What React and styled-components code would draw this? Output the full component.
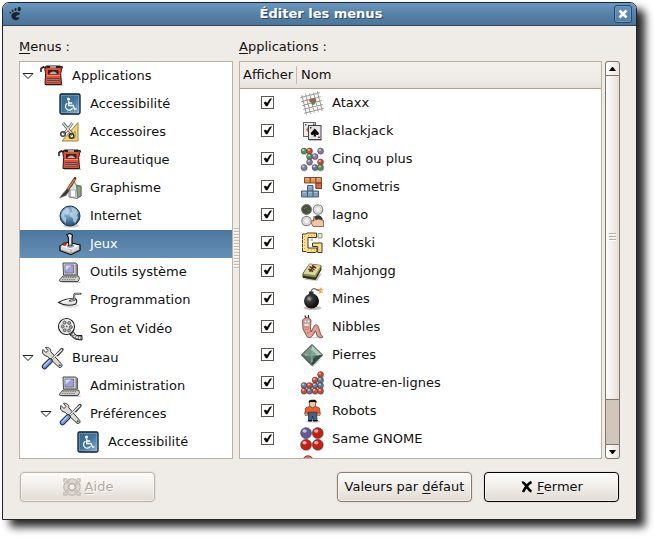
import React from "react";
import styled, { createGlobalStyle, css } from "styled-components";

const GlobalStyle = createGlobalStyle`
  *, *::before, *::after { box-sizing: border-box; }
  body {
    margin: 0;
    background: #fff;
    color: #101010;
    font: 13px/18px "DejaVu Sans", Verdana, sans-serif;
  }
  button { font: inherit; color: inherit; }
`;

/* ---------- window ---------- */

const Desktop = styled.div`
  padding: 2px 18px 18px 2px;
`;

const Window = styled.main`
  border: 1px solid #20252a;
  border-radius: 7px 7px 0 0;
  background: #efebe6;
  box-shadow: 8px 7px 9px rgba(0, 0, 0, 0.84);
`;

const TitleBar = styled.header`
  display: grid;
  grid-template-columns: 24px 1fr 24px;
  align-items: center;
  height: 23px;
  padding: 0 2px 0 5px;
  border-bottom: 1px solid #2f475e;
  border-radius: 6px 6px 0 0;
  background: linear-gradient(#6a97c0, #5781a8 50%, #4e7597);
`;

const Title = styled.h1`
  margin: 0;
  color: #fff;
  font-size: 13px;
  line-height: 18px;
  font-weight: bold;
  text-align: center;
  text-shadow: 1px 1px 0 #2e4a66;
`;

const CloseButton = styled.button`
  display: grid;
  place-items: center;
  justify-self: end;
  width: 18px;
  height: 18px;
  padding: 0;
  margin-right: 2px;
  border: 1px solid #2c4963;
  border-radius: 3px;
  background: linear-gradient(#6390b9, #5580a8);
  box-shadow: inset 0 0 0 1px #6d98bf;
`;

const Body = styled.div`
  padding: 12px 16px 17px;
`;

const Panes = styled.div`
  display: grid;
  grid-template-columns: 214px 6px minmax(0, 1fr);
`;

const Pane = styled.section`
  display: flex;
  flex-direction: column;
  gap: 5px;
`;

const PaneTitle = styled.h2`
  margin: 0;
  font-size: 13px;
  line-height: 18px;
  font-weight: normal;
`;

const Mnemonic = styled.span`
  text-decoration: underline;
  text-decoration-thickness: 1px;
  text-underline-offset: 2px;
`;

const Splitter = styled.div`
  align-self: center;
  height: 42px;
  margin-left: 1px;
  background: repeating-linear-gradient(#c5bbaf 0 1px, #fbfaf8 1px 2px, #efebe6 2px 3px);
`;

/* ---------- menu tree ---------- */

const Tree = styled.ul`
  flex: 1;
  margin: 0;
  padding: 0 0 2px;
  border: 1px solid #bab09f;
  background: #fff;
  list-style: none;
`;

const TreeRow = styled.li`
  display: flex;
  align-items: center;
  height: ${(p) => (p.$tall ? 30 : 28)}px;
  padding-left: ${(p) => 2 + p.$level * 18}px;
  ${(p) =>
    p.$selected &&
    css`
      color: #fff;
      background: linear-gradient(#4c779f, #668fb6);
    `}
`;

const Expander = styled.button`
  flex: none;
  display: flex;
  width: 18px;
  padding: 0;
  border: 0;
  background: none;
`;

const ExpanderSpace = styled.span`
  flex: none;
  width: 18px;
`;

const IconSvg = styled.svg`
  flex: none;
  display: block;
  overflow: visible;
`;

const RowText = styled.span`
  padding-left: 8px;
  white-space: nowrap;
`;

/* ---------- application table ---------- */

const ScrollArea = styled.div`
  flex: 1;
  display: grid;
  grid-template-columns: minmax(0, 1fr) 15px;
  grid-template-rows: minmax(0, 1fr);
  column-gap: 3px;
`;

const ListFrame = styled.div`
  display: flex;
  flex-direction: column;
  border: 1px solid #bab09f;
  background: #fff;
`;

const ListViewport = styled.div`
  flex: 1 1 0;
  height: 0;
  min-height: 0;
  overflow: hidden;
`;

const Table = styled.table`
  width: 100%;
  table-layout: fixed;
  border-collapse: separate;
  border-spacing: 0;
`;

const HeadCell = styled.th`
  width: ${(p) => p.$width || "auto"};
  height: 27px;
  padding: 0 0 0 ${(p) => (p.$first ? 3 : 4)}px;
  border-bottom: 1px solid #b39f91;
  background: linear-gradient(#f3f0ec, #efebe6 70%, #e6e0da);
  font-weight: normal;
  text-align: left;
  white-space: nowrap;
`;

const HeadText = styled.span`
  display: block;
  ${(p) =>
    p.$divided &&
    css`
      border-right: 1px solid #c4b8ab;
    `}
`;

const CheckCell = styled.td`
  height: 28px;
  padding: 0 0 2px 21px;
`;

const NameCell = styled.td`
  height: 28px;
  padding: 0 0 0 3px;
`;

const AppLabel = styled.label`
  display: flex;
  align-items: center;
`;

const CheckStack = styled.span`
  display: grid;
  width: 13px;
  height: 13px;
  > * {
    grid-area: 1 / 1;
  }
`;

const CheckInput = styled.input`
  appearance: none;
  width: 13px;
  height: 13px;
  margin: 0;
  border: 1px solid #5f574e;
  background: #fff;
  &:not(:checked) + svg {
    visibility: hidden;
  }
`;

const CheckMark = styled.svg`
  display: block;
  pointer-events: none;
`;

/* ---------- scroll bar ---------- */

const ScrollBar = styled.div`
  display: flex;
  flex-direction: column;
  border-radius: 3px;
  background: #d0c6bc;
`;

const ScrollButton = styled.button`
  flex: none;
  display: grid;
  place-items: center;
  height: 15px;
  padding: 0;
  border: 1px solid #857568;
  border-radius: ${(p) => (p.$down ? "0 0 3px 3px" : "3px 3px 0 0")};
  background: linear-gradient(90deg, #fff, #e9e4df);
`;

const Trough = styled.div`
  flex: 1;
  display: flex;
  border: solid #857568;
  border-width: 0 1px;
`;

const Thumb = styled.div`
  flex: 1;
  display: grid;
  place-items: center;
  height: 88%;
  border-bottom: 1px solid #857568;
  background: linear-gradient(90deg, #fdfdfc, #efebe7 60%, #e4ded8);
`;

const Grip = styled.div`
  width: 7px;
  height: 8px;
  background: repeating-linear-gradient(#b9aea2 0 1px, #fff 1px 2px, #f2efeb 2px 3px);
`;

/* ---------- footer ---------- */

const Footer = styled.footer`
  display: flex;
  gap: 12px;
  padding: 13px 1px 0;
`;

const PushButton = styled.button`
  display: flex;
  align-items: center;
  justify-content: center;
  gap: 3px;
  width: 135px;
  height: 30px;
  padding: 0;
  border: 1px solid ${(p) => (p.$default ? "#000" : "#8d7c70")};
  border-radius: 4px;
  background: linear-gradient(#fdfcfb, #f0ece8 50%, #e2dbd4);
  box-shadow: inset 0 0 0 1px rgba(255, 255, 255, 0.45), 0 0 0 1px #e6e0da;
  white-space: nowrap;
  ${(p) => p.$push && "margin-right: auto;"}
  &:disabled {
    border-color: #bfb3a5;
    color: #b5aa9f;
    text-shadow: 1px 1px 0 #fff;
  }
`;

/* ---------- drawings ---------- */

const GradientStore = styled.svg`
  display: block;
  width: 0;
  height: 0;
`;

const Gradients = () => (
  <GradientStore aria-hidden="true">
    <defs>
      <linearGradient id="blueTile" x1="0" y1="0" x2="1" y2="1">
        <stop offset="0" stopColor="#34648b" />
        <stop offset="0.5" stopColor="#41749c" />
        <stop offset="1" stopColor="#8db9d6" />
      </linearGradient>
      <radialGradient id="globe" cx="0.4" cy="0.3" r="0.75">
        <stop offset="0" stopColor="#a9c8e0" />
        <stop offset="0.5" stopColor="#5587b2" />
        <stop offset="1" stopColor="#23456b" />
      </radialGradient>
      <radialGradient id="bomb" cx="0.35" cy="0.35" r="0.7">
        <stop offset="0" stopColor="#b0b0b0" />
        <stop offset="0.3" stopColor="#3a3a3a" />
        <stop offset="1" stopColor="#050505" />
      </radialGradient>
    </defs>
  </GradientStore>
);

const Ball = ({ x, y, r = 3.2, c }) => (
  <g>
    <circle cx={x + 0.5} cy={y + 0.7} r={r} fill="#000" opacity="0.18" />
    <circle cx={x} cy={y} r={r - 0.3} fill={c} stroke="#332c30" strokeOpacity="0.6" strokeWidth="0.8" />
    <ellipse cx={x - r * 0.25} cy={y - r * 0.35} rx={r * 0.38} ry={r * 0.3} fill="#fff" opacity="0.65" />
  </g>
);

const RED = "#d04a38";
const GRAY = "#8a7ca0";
const GREEN = "#4f9a55";
const STEEL = "#66788f";

const drawings = {
  typewriter: (
    <g>
      <path d="M6 20.5h17v1.500H6z" fill="#000" opacity=".25" />
      <path d="M1 8V4.500L3.500 3 6 4.500M21.500 2l1 2.500" fill="none" stroke="#222" strokeWidth="1.600" />
      <path d="M6 2h14.500l1 4-.8 3.500.8 11H5l.6-11L4.800 5.500z" fill="#ea4b33" stroke="#2a1512" />
      <path d="M6.500 2h13.500v2H6.500z" fill="#222" />
      <path d="M10 2.300h6v1.400h-6z" fill="#d8d0cc" />
      <path d="M8 6h10.500v4.500H8z" fill="#38201e" />
      <path d="M9.500 10c1-3.500 6.500-3.500 7.500 0z" fill="#b8b0aa" />
      <path d="M6.500 11.500h13.500" stroke="#ff8a70" />
      <path d="M7 14h12.500v4.500H7z" fill="#6b4039" />
      <path d="M7.500 15.500h12M7.500 17.500h12" stroke="#e0b0a2" strokeDasharray="1 1" />
    </g>
  ),
  access: (
    <g>
      <rect x="2" y="2" width="20" height="20" rx="1.500" fill="url(#blueTile)" stroke="#0c1a28" strokeWidth="1.300" />
      <rect x="3.200" y="3.200" width="17.600" height="17.600" fill="none" stroke="#9fc3dc" strokeWidth=".7" opacity=".7" />
      <circle cx="10.500" cy="7" r="1.500" fill="#fff" />
      <path d="M10.700 8.500v5h4.300l1.600 3.800 1.900-.6M10.700 11h3.500" fill="none" stroke="#fff" strokeWidth="1.300" />
      <path d="M9.300 11.300a3.700 3.700 0 1 0 5.200 4.900" fill="none" stroke="#fff" strokeWidth="1.200" />
    </g>
  ),
  scissors: (
    <g>
      <path d="M20 2.500V21H4z" fill="#f0d374" stroke="#9d8434" />
      <path d="M17 11.500V18h-6z" fill="#fff" stroke="#9d8434" />
      <path d="M5 3l9 11M14.500 3L6 14" stroke="#555" strokeWidth="2.800" />
      <path d="M5 3l9 11M14.500 3L6 14" stroke="#ddd" strokeWidth="1.300" />
      <circle cx="5" cy="14" r="2.300" fill="none" stroke="#444" strokeWidth="1.500" />
      <circle cx="13.500" cy="16" r="2.300" fill="none" stroke="#333" strokeWidth="1.500" />
    </g>
  ),
  graphics: (
    <g>
      <path d="M11 12l3-2 2-5 2 4 5 1v10l-4 2.500-8-1.500z" fill="#dfe3df" stroke="#6a726a" strokeWidth=".9" />
      <path d="M18.500 9.500l4.500 1v9.500l-3.500 1.500z" fill="#8aa184" stroke="#56604f" strokeWidth=".8" />
      <path d="M12.500 14h5v7h-5z" fill="#fff" stroke="#888" strokeWidth=".6" />
      <path d="M17 2.500L9.500 14" stroke="#4a2a10" strokeWidth="2.800" strokeLinecap="round" />
      <path d="M16.800 3L10 13" stroke="#cc8a48" strokeWidth="1.500" />
      <path d="M9 13l2.500 1.500-3.500 5L1.500 22l3-4z" fill="#3a3a3a" stroke="#777" strokeWidth=".6" />
    </g>
  ),
  globe: (
    <g>
      <ellipse cx="13" cy="21.500" rx="8" ry="2" fill="#000" opacity=".2" />
      <circle cx="12" cy="12" r="10" fill="url(#globe)" stroke="#1e3651" strokeWidth="1" />
      <path d="M4.500 7.500l4-3.500 3 1-1 2.500 1.500 1-3 2.500-2-1-1 2 2.500 2-1 5.500-3-4-1.500-4zM13 3l5 2 2.500 4-1.500 1.500 1 3-2.500 5.500-2-1-1-4.500-2.500-1-.5-3 3-2z" fill="#c2daea" opacity=".75" />
    </g>
  ),
  joystick: (
    <g>
      <path d="M2 14l8-3.500 12 2.500v5l-9 4.500L2 18.500z" fill="#d9d9d9" stroke="#111" strokeWidth="1.300" />
      <path d="M2.500 14l8-3 11 2.500-8.500 3.700z" fill="#fff" />
      <path d="M13 17.500v4.500M3 18l10 3.500 8.500-4" stroke="#8b8b8b" strokeWidth=".8" fill="none" />
      <path d="M9 2.500l3-1 2.500 1.500-.5 3v8h-3.500V6z" fill="#e8e8e8" stroke="#111" strokeWidth="1.200" />
      <ellipse cx="12.300" cy="14" rx="3.500" ry="1.300" fill="none" stroke="#777" strokeWidth=".8" />
      <ellipse cx="6.500" cy="12" rx="1.700" ry="1.500" fill="#e32b20" stroke="#6b0d0a" strokeWidth=".7" />
    </g>
  ),
  computer: (
    <g>
      <path d="M4 21.500h18l1 1.500H4z" fill="#000" opacity=".2" />
      <path d="M5 3h12.500l2 1.500V15H5.500z" fill="#d3cfc9" stroke="#4a4a4a" strokeWidth="1" />
      <path d="M17.500 3.500l1.800 1.200V15l-1.800-.5z" fill="#8d8a86" />
      <path d="M7 5h8.500v8H7z" fill="#a09fd6" stroke="#6a6a90" strokeWidth=".8" />
      <path d="M7.500 5.500h6l-6 5z" fill="#d6d6f4" />
      <path d="M5 16h15.500l1 2.500-1.500 3H2L1.500 20z" fill="#d3d0cb" stroke="#4a4a4a" strokeWidth="1" />
      <path d="M5 17.700h13M4 19.700h13.500" stroke="#777" strokeDasharray="1.500 .8" />
    </g>
  ),
  trowel: (
    <g>
      <path d="M4 17.500l9 1.500 8-2" fill="none" stroke="#000" strokeWidth="2" opacity=".12" />
      <path d="M0.500 14.500C5 11.500 9 10.500 16 10.200c3 .5 3.500 3 1.800 5.800-5 1.800-12 1.500-17.300-1.500z" fill="#e6e6e6" stroke="#222" strokeWidth="1.100" />
      <path d="M4 14.200c4-1.800 7-2.700 11-3" fill="none" stroke="#fff" strokeWidth="1.500" />
      <path d="M12 12.800l4.500-1-.5-4.500 1-1.500h5.500" fill="none" stroke="#444" strokeWidth="2" strokeLinecap="round" />
      <path d="M12.500 12.700l4-1-.5-4.400 1.200-1.500h5" fill="none" stroke="#c8c8c8" strokeWidth=".8" />
    </g>
  ),
  film: (
    <g>
      <path d="M13 14c3-1 3 4 6 4.500h5V23l-5-.5c-5-1-4-3.500-7-4.500z" fill="#777" stroke="#111" strokeWidth=".9" />
      <path d="M15 16.500l1.500 2.500 3 1.500 4 .5" fill="none" stroke="#eee" strokeWidth="2" strokeDasharray="1.500 1" />
      <circle cx="8.500" cy="9.500" r="8" fill="#dedede" stroke="#222" strokeWidth="1.200" />
      <circle cx="8.500" cy="9.500" r="6.700" fill="none" stroke="#fff" strokeWidth=".9" />
      {[[6.6, 5.500], [11.200, 6], [4.700, 9.500], [12.900, 10], [6.700, 13.300], [11, 13.500]].map(([x, y]) => (
        <circle key={x} cx={x} cy={y} r="1.500" fill="#a8a8a8" stroke="#444" strokeWidth=".7" />
      ))}
      <circle cx="8.700" cy="9.500" r=".8" fill="#555" />
    </g>
  ),
  tools: (
    <g>
      <path d="M3 3.500l3 3 2-2-2.500-3c3-.7 5.500 1 5.300 4.300l11 12.700c1 2-1 3.700-2.800 2.800L7.500 10.500C3.500 9.500 1.500 7 3 3.500z" fill="#dcdcd5" stroke="#333" strokeWidth="1" />
      <circle cx="19.700" cy="19.200" r="1" fill="#444" />
      <path d="M22 3L11 14" stroke="#222" strokeWidth="2" />
      <path d="M22 3.500l-4.500 5" stroke="#444" strokeWidth="3.400" strokeLinecap="round" />
      <path d="M22 3.500L11 14" stroke="#eee" strokeWidth="1.500" />
      <path d="M10 15l-5.500 5.500" stroke="#1c2c4c" strokeWidth="5.500" strokeLinecap="round" />
      <path d="M10 15l-5.500 5.500" stroke="#6d92c8" strokeWidth="3.800" strokeLinecap="round" />
      <path d="M9.300 14.700l-5 5" stroke="#b8cdee" strokeWidth="1.300" strokeLinecap="round" />
    </g>
  ),
  ataxx: (
    <g>
      <g stroke="#a09a95" strokeWidth="1" transform="rotate(-14 12 12)">
        <path d="M4 2v20M8 2v20M12 2v20M16 2v20M20 2v20M2 4h20M2 8h20M2 12h20M2 16h20M2 20h20" />
      </g>
      <path d="M10 8l4-1 2.500 3-2.500 4-2-.5z" fill="#5a855a" />
      <circle cx="14.500" cy="9" r="1.800" fill="#a85a48" />
      <path d="M9.500 9l2 2" stroke="#c04838" strokeWidth="1.800" />
    </g>
  ),
  cards: (
    <g>
      <rect x="3.500" y="3.500" width="12" height="14" fill="#ececec" stroke="#666" />
      <path d="M8.500 7l2.500 3.500L8.500 14 6 10.500z" fill="#ee5530" />
      <path d="M5 5h1.500v1.500H5zM13 4.500h1.500V6H13z" fill="#555" />
      <path d="M9.500 20.500h12.500v1.500H9.500z" fill="#000" opacity=".25" />
      <rect x="8.500" y="6.500" width="12.500" height="14" fill="#e3e3e3" stroke="#444" />
      <path d="M14.800 9.500l4 4.500c.4 2-2.100 2.800-3.300 1.300l.7 2.200h-2.800l.7-2.200c-1.200 1.500-3.700.7-3.300-1.300z" fill="#050505" />
      <path d="M10 8h1.500v1.500H10zM18.200 17.500h1.500V19h-1.500z" fill="#333" />
    </g>
  ),
  fiveplus: (
    <g>
      <Ball x={4} y={4} c={GREEN} /><Ball x={9.500} y={4} c={RED} /><Ball x={20.500} y={4} c={GRAY} />
      <Ball x={9.500} y={9.500} c={GREEN} /><Ball x={15} y={9.500} c={GRAY} />
      <Ball x={9.500} y={15} c={GRAY} /><Ball x={20.500} y={15} c={RED} />
      <Ball x={4} y={20.500} c={GRAY} /><Ball x={15} y={20.500} c={STEEL} /><Ball x={20.500} y={20.500} c={GREEN} />
    </g>
  ),
  blocks: (
    <g strokeWidth=".9">
      <path d="M4.500 2.500h17v11h-5.500V8h-11.500z" fill="#e09052" stroke="#754024" />
      <path d="M16 8h5.500v5.500H16z" fill="#d8674a" stroke="#754024" />
      <path d="M10.200 2.500V8M15.800 2.500V8M16 8h5.500" stroke="#754024" />
      <path d="M5.500 4h3.500M11.500 4h3M17 4h3" stroke="#f7c79c" />
      <path d="M7.500 10.500H13V16h5.500v6H1.500v-6h6z" fill="#7f9fc2" stroke="#41546e" />
      <path d="M7.500 16H13M7.500 16v6M13 16v6" stroke="#41546e" />
      <path d="M8.700 12h3M2.800 17.500H6M8.700 17.500h3M14.200 17.500h3" stroke="#b5cae0" />
    </g>
  ),
  iagno: (
    <g>
      <circle cx="6.500" cy="6.500" r="5" fill="#49503c" stroke="#777b69" strokeWidth="1" />
      <path d="M4 5.500l3-1M7.500 8l2-.5" stroke="#6f7660" />
      <circle cx="18" cy="6.500" r="4.700" fill="#eef0ee" stroke="#888" strokeWidth="1.200" />
      <circle cx="18" cy="6.500" r="3" fill="none" stroke="#c4c4c4" strokeWidth=".8" />
      <circle cx="6.500" cy="18" r="4.700" fill="#eef0ee" stroke="#888" strokeWidth="1.200" />
      <circle cx="6.500" cy="18" r="3" fill="none" stroke="#c4c4c4" strokeWidth=".8" />
      <circle cx="18" cy="17" r="4.700" fill="#303a28" />
      <path d="M14 13l2 4 2.500-1 5 1.500V23.500H13l-1.500-3 .5-3 2 .5z" fill="#efc5a8" stroke="#7c4b38" strokeWidth=".8" />
    </g>
  ),
  klotski: (
    <g strokeWidth="1">
      <path d="M2.500 3h3l1.500-1h9.500v4.500H8V17h9v3.500l-2 1H7l-1-1H2.500z" fill="#f5de88" stroke="#48391f" />
      <path d="M2.800 4.500l2 2-2 2 2 2-2 2 2 2-2 2 2 2" fill="none" stroke="#fff4c2" />
      <path d="M4.500 5v13M8 4.500h7M8 19h7" stroke="#d98f55" strokeDasharray="1 2" />
      <path d="M12.500 12H22v9.500h-4.300V15.500h-5.200z" fill="#f5de88" stroke="#48391f" />
      <path d="M18 2.500h4V7h-4z" fill="#f7e79a" stroke="#7f98a2" />
      <path d="M10.500 7.500h2.500v2.500h-2.500z" fill="#b4c6cd" />
    </g>
  ),
  mahjongg: (
    <g>
      <path d="M4 20.500l13 1.500 5-8z" fill="#000" opacity=".25" />
      <path d="M3 14.500L9.500 5 21 6.500v4L15.500 20.500 3 18.500z" fill="#8d9347" stroke="#2f3117" strokeWidth=".9" />
      <path d="M3 16.500l12.500 2L21 9v2l-5.500 9.500L3 18.500z" fill="#2d3418" />
      <path d="M3.300 14.500L9.500 5 21 6.500l-6 9.800z" fill="#d9d6a0" />
      <path d="M9.500 7.500l5 3.500M14 6.800l-4.500 6M8.500 10l4.500 2.500M12 6.500l4 2.500" stroke="#632f20" strokeWidth="1.500" />
    </g>
  ),
  mine: (
    <g>
      <ellipse cx="12.500" cy="21" rx="9" ry="2" fill="#000" opacity=".25" />
      <path d="M11 5c.5-3.500 3.500-4.500 6-2l2 .5" fill="none" stroke="#666" strokeWidth="1.300" />
      <path d="M9 4.500h4.500V8H9z" fill="#333" />
      <circle cx="11.500" cy="14" r="7.500" fill="url(#bomb)" />
      <path d="M18 1.500l2 1 1-2.500.8 2.500L23 2l-1 2 1 2-2-.8-1.500 1.500V4.500z" fill="#ff7a22" />
      <path d="M19.500 3h3l-1 2z" fill="#ffe456" />
    </g>
  ),
  worm: (
    <g>
      <path d="M6 22h10l2-2 5 2-2 1.500z" fill="#000" opacity=".2" />
      <path d="M5 .5l1 3M8.500 0v3" stroke="#333" strokeWidth="1.300" />
      <path d="M2.500 6c.5-4 7-4.500 8.500-1l-.5 8 .5 4 3.500-6.500c1.500-1.500 3.500-.5 4 1.500l2 7 2.500 3-3 .8-2.800-2-1.700-5-4 6c-2 1.500-4.500.8-5-1L3 14z" fill="#e2a294" stroke="#7a453c" strokeWidth=".9" />
      <path d="M4 12h5M4.500 15l4.500-1.300M6 18.500l4-1.500M12.500 17l2 1.500M16.500 13l2.500-.7M18 17l2.500-.7" stroke="#b8776b" strokeWidth=".8" />
      <circle cx="5.500" cy="6.500" r="1.400" fill="#fff" stroke="#555" strokeWidth=".4" />
      <circle cx="8.500" cy="6.500" r="1.400" fill="#fff" stroke="#555" strokeWidth=".4" />
      <path d="M4.500 10h4" stroke="#fff" strokeWidth="1.500" />
    </g>
  ),
  gem: (
    <g>
      <path d="M4 15l9 9 9-9-9 5z" fill="#000" opacity=".2" />
      <path d="M12 1.500L22.500 12 12 22.500 1.500 12z" fill="#6f9080" />
      <path d="M12 1.500V12H1.500z" fill="#7f9a8b" /><path d="M12 1.500V12h10.500z" fill="#b3c9bb" />
      <path d="M12 22.500V12h10.500z" fill="#2f4f41" /><path d="M12 22.500V12H1.500z" fill="#587769" />
      <path d="M12 5v14M5 12h14" stroke="#dbe7df" strokeWidth=".8" />
      <path d="M12 7l5 5-5 5-5-5z" fill="#6e9180" opacity=".7" />
      <path d="M12 1.500L22.500 12 12 22.500 1.500 12z" fill="none" stroke="#30463a" strokeWidth="1" />
    </g>
  ),
  fourrow: (
    <g>
      <Ball x={20.500} y={3.500} c={RED} /><Ball x={15} y={9} c={RED} /><Ball x={20.500} y={9} c={STEEL} />
      <Ball x={4} y={14.500} c={STEEL} /><Ball x={9.500} y={14.500} c={RED} /><Ball x={15} y={14.500} c={STEEL} /><Ball x={20.500} y={14.500} c={STEEL} />
      <Ball x={4} y={20} c={RED} /><Ball x={9.500} y={20} c={STEEL} /><Ball x={15} y={20} c={RED} /><Ball x={20.500} y={20} c={RED} />
    </g>
  ),
  robot: (
    <g>
      <ellipse cx="13" cy="22.500" rx="7" ry="1.200" fill="#000" opacity=".2" />
      <path d="M8.500 13h8l.5 9H13.300l-.7-5-.8 5H8.500z" fill="#3f6386" stroke="#1d2c3c" strokeWidth=".8" />
      <path d="M8 21.700h4M13.300 21.700h4.500" stroke="#111" strokeWidth="1.300" />
      <path d="M5.500 9l4-1.500h6l4 1.500.7 6h-2.700l-.5-2H8l-.5 2H4.800z" fill="#ee5f2c" stroke="#8a3a1e" strokeWidth=".8" />
      <path d="M5 14h2.500v2.500H5zM17.500 14H20v2.500h-2.500z" fill="#dfa48a" stroke="#633c2d" strokeWidth=".5" />
      <path d="M9.500 2.500h6v4.700l-3 1.600-3-1.600z" fill="#efc3a8" stroke="#54382c" strokeWidth=".7" />
      <path d="M8.800 4.300V1.800L11 .7h4l1.500 1.300v2.300l-1.300-1.300H10z" fill="#111" />
    </g>
  ),
  same: (
    <g>
      <Ball x={6} y={6} r={5.700} c="#605a9a" /><Ball x={17.700} y={6} r={5.700} c="#c81f12" />
      <Ball x={6} y={17.700} r={5.700} c="#c81f12" /><Ball x={17.700} y={17.700} r={5.700} c="#c81f12" />
    </g>
  ),
  robots2: (
    <g>
      <circle cx="8" cy="6.300" r="5.500" fill="#e66b64" stroke="#7a3a38" strokeWidth="1" />
      <ellipse cx="7" cy="4" rx="2.500" ry="1.300" fill="#f3a8a2" />
    </g>
  ),
};

const Icon = ({ name }) => (
  <IconSvg width="24" height="24" viewBox="0 0 24 24" aria-hidden="true">
    {drawings[name]}
  </IconSvg>
);

const FootIcon = () => (
  <IconSvg width="16" height="16" viewBox="0 0 16 16" aria-hidden="true">
    <g fill="#172431" stroke="#7d9fbe" strokeWidth=".4">
      <path d="M3.300 8.500c1-2.500 5.500-3.500 8-2 2 1.500-.5 3-2.500 3.300-1 .2-.8 1.500.3 1.500 1-.2 2-.8 2.500 0 .4 1.700-2 3.700-4.200 3.300-3.200-.5-5-3.800-4.100-6.100z" />
      <ellipse cx="11.300" cy="3" rx="1.900" ry="2.500" />
      <ellipse cx="7.500" cy="3.500" rx="1.300" ry="1.800" />
      <ellipse cx="4.700" cy="4.800" rx="1.100" ry="1.500" />
      <ellipse cx="2.300" cy="6.600" rx="1" ry="1.200" />
    </g>
  </IconSvg>
);

const LifebuoyIcon = () => (
  <IconSvg width="20" height="20" viewBox="0 0 20 20" aria-hidden="true">
    <path d="M2 5V2h3M15 2h3v3M18 15v3h-3M5 18H2v-3" fill="none" stroke="#c4bcb4" strokeWidth="1.500" />
    <circle cx="10" cy="10" r="6" fill="none" stroke="#bdb5ad" strokeWidth="5.500" />
    <circle cx="10" cy="10" r="6" fill="none" stroke="#dcd7d2" strokeWidth="3.500" />
    <circle cx="10" cy="10" r="6" fill="none" stroke="#cbc4bd" strokeWidth="3.500" strokeDasharray="3.400 6.025" strokeDashoffset="-3" />
    <circle cx="10" cy="10" r="3.200" fill="#f3f0ed" stroke="#b3aaa1" />
  </IconSvg>
);

/* ---------- data ---------- */

const menus = [
  { label: "Applications", icon: "typewriter", level: 0, open: true },
  { label: "Accessibilité", icon: "access", level: 1 },
  { label: "Accessoires", icon: "scissors", level: 1 },
  { label: "Bureautique", icon: "typewriter", level: 1 },
  { label: "Graphisme", icon: "graphics", level: 1 },
  { label: "Internet", icon: "globe", level: 1 },
  { label: "Jeux", icon: "joystick", level: 1, selected: true },
  { label: "Outils système", icon: "computer", level: 1 },
  { label: "Programmation", icon: "trowel", level: 1 },
  { label: "Son et Vidéo", icon: "film", level: 1, tall: true },
  { label: "Bureau", icon: "tools", level: 0, open: true },
  { label: "Administration", icon: "computer", level: 1 },
  { label: "Préférences", icon: "tools", level: 1, open: true },
  { label: "Accessibilité", icon: "access", level: 2 },
];

const apps = [
  ["Ataxx", "ataxx"],
  ["Blackjack", "cards"],
  ["Cinq ou plus", "fiveplus"],
  ["Gnometris", "blocks"],
  ["Iagno", "iagno"],
  ["Klotski", "klotski"],
  ["Mahjongg", "mahjongg"],
  ["Mines", "mine"],
  ["Nibbles", "worm"],
  ["Pierres", "gem"],
  ["Quatre-en-lignes", "fourrow"],
  ["Robots", "robot"],
  ["Same GNOME", "same"],
];

const MenuItem = ({ item }) => (
  <TreeRow
    role="treeitem"
    aria-level={item.level + 1}
    aria-expanded={item.open}
    aria-selected={!!item.selected}
    $level={item.level}
    $selected={item.selected}
    $tall={item.tall}
  >
    {item.open ? (
      <Expander aria-label={`Replier ${item.label}`}>
        <svg width="12" height="8" viewBox="0 0 12 8" aria-hidden="true">
          <path d="M1 1.500h10L6 6.500z" fill="#fff" stroke="#222" />
        </svg>
      </Expander>
    ) : (
      <ExpanderSpace />
    )}
    <Icon name={item.icon} />
    <RowText>{item.label}</RowText>
  </TreeRow>
);

const AppRow = ({ name, icon }) => {
  const id = `app-${icon}`;
  return (
    <tr>
      <CheckCell>
        <CheckStack>
          <CheckInput type="checkbox" id={id} defaultChecked />
          <CheckMark width="13" height="13" viewBox="0 0 13 13" aria-hidden="true">
            <path d="M3 6.500l2-.5 1 1.500L9 3l1.500-.3L6.300 10H5z" fill="#000" stroke="#000" strokeWidth=".6" />
          </CheckMark>
        </CheckStack>
      </CheckCell>
      <NameCell>
        <AppLabel htmlFor={id}>
          <Icon name={icon} />
          <RowText>{name}</RowText>
        </AppLabel>
      </NameCell>
    </tr>
  );
};

export default function App() {
  return (
    <Desktop>
      <GlobalStyle />
      <Window>
        <TitleBar>
          <FootIcon />
          <Title>Éditer les menus</Title>
          <CloseButton aria-label="Fermer la fenêtre">
            <svg width="10" height="10" viewBox="0 0 10 10" aria-hidden="true">
              <path d="M1.500 1.500l7 7M8.500 1.500l-7 7" stroke="#fff" strokeWidth="2.600" />
            </svg>
          </CloseButton>
        </TitleBar>
        <Body>
          <Panes>
            <Pane>
              <PaneTitle><Mnemonic>M</Mnemonic>enus :</PaneTitle>
              <Tree role="tree" aria-label="Menus">
                {menus.map((item, i) => <MenuItem key={i} item={item} />)}
              </Tree>
            </Pane>
            <Splitter role="separator" aria-orientation="vertical" />
            <Pane>
              <PaneTitle><Mnemonic>A</Mnemonic>pplications :</PaneTitle>
              <ScrollArea>
                <ListFrame>
                  <ListViewport>
                    <Table>
                      <thead>
                        <tr>
                          <HeadCell $width="57px" $first><HeadText $divided>Afficher</HeadText></HeadCell>
                          <HeadCell><HeadText>Nom</HeadText></HeadCell>
                        </tr>
                      </thead>
                      <tbody>
                        {apps.map(([name, icon]) => <AppRow key={icon} name={name} icon={icon} />)}
                        <tr>
                          <CheckCell />
                          <NameCell><Icon name="robots2" /></NameCell>
                        </tr>
                      </tbody>
                    </Table>
                  </ListViewport>
                </ListFrame>
                <ScrollBar>
                  <ScrollButton aria-label="Défiler vers le haut">
                    <svg width="7" height="4" viewBox="0 0 7 4" aria-hidden="true"><path d="M0 4l3-4h1l3 4z" /></svg>
                  </ScrollButton>
                  <Trough>
                    <Thumb><Grip /></Thumb>
                  </Trough>
                  <ScrollButton $down aria-label="Défiler vers le bas">
                    <svg width="7" height="4" viewBox="0 0 7 4" aria-hidden="true"><path d="M0 0l3 4h1l3-4z" /></svg>
                  </ScrollButton>
                </ScrollBar>
              </ScrollArea>
            </Pane>
          </Panes>
          <Footer>
            <PushButton disabled $push>
              <LifebuoyIcon />
              <span><Mnemonic>A</Mnemonic>ide</span>
            </PushButton>
            <PushButton>
              <span>Valeurs par <Mnemonic>d</Mnemonic>éfaut</span>
            </PushButton>
            <PushButton $default>
              <svg width="14" height="14" viewBox="0 0 14 14" aria-hidden="true">
                <path d="M2 2.500C4 2 5 4 7 7s3 4 4.500 4.500M11.500 2C9 3 5 8 3 12" fill="none" stroke="#000" strokeWidth="2.600" />
              </svg>
              <span><Mnemonic>F</Mnemonic>ermer</span>
            </PushButton>
          </Footer>
        </Body>
      </Window>
      <Gradients />
    </Desktop>
  );
}
